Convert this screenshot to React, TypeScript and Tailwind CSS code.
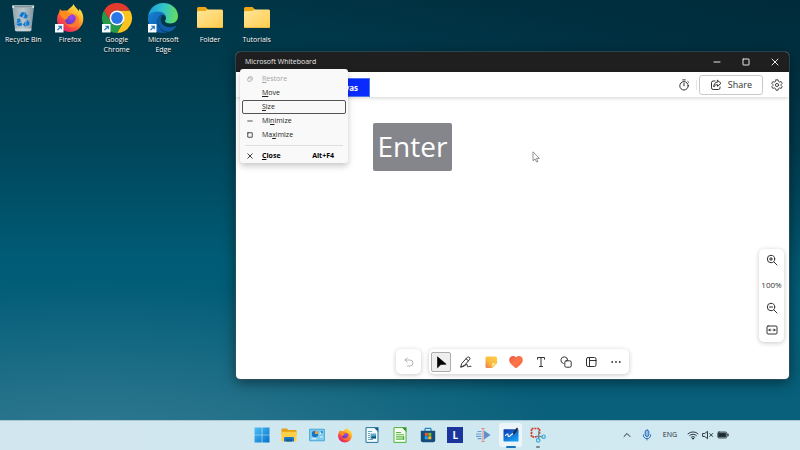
import React from "react";

type IconProps = { className?: string };

const stroke = {
  fill: "none",
  stroke: "currentColor",
  strokeLinecap: "round" as const,
  strokeLinejoin: "round" as const,
};

/* ---------- desktop icons ---------- */

function ShortcutArrow() {
  return (
    <g>
      <rect x="1" y="21" width="8.500" height="8.500" fill="#f8fbff" />
      <path d="M3.500 27 7.200 23.300M4.300 23.200h3v3" fill="none" stroke="#1673b8" strokeWidth="1.100" />
    </g>
  );
}

function RecycleBin() {
  return (
    <svg viewBox="0 0 32 30" className="h-[30px] w-8">
      <defs>
        <linearGradient id="bin" x1="0" x2="1">
          <stop offset="0" stopColor="#93a7af" />
          <stop offset=".5" stopColor="#b7c5ca" />
          <stop offset="1" stopColor="#7e949e" />
        </linearGradient>
      </defs>
      <path d="M5.200 2.500h22L24.300 27a1.500 1.500 0 0 1-1.500 1.300H9.500A1.500 1.500 0 0 1 8 27z" fill="url(#bin)" />
      <path d="M5.200 2.500h22l-.3 2.600H5.500z" fill="#dbe3e6" />
      <path d="M7 3.300h18.500l-.2 1.200H7.200z" fill="#66777f" />
      <path d="M7.900 25.500h16.600l-.2 1.800a1.500 1.500 0 0 1-1.400 1H9.500a1.500 1.500 0 0 1-1.500-1z" fill="#d3dce0" opacity=".7" />
      <g fill="#0878d4" stroke="#9db6c2" strokeWidth=".4">
        <path d="M12 13.300 13.800 10q.6-1 1.700-1h2.800l-2.900 5.500z" />
        <path d="m17.500 9 1.200.6 1.500 2.600 1.300-.7-1.600 4.200-4.300-.8 1.400-.8z" />
        <path d="m20.300 16.300 2.300 3.300q.4 1-.2 1.800L21 22.900h-2v-3.600z" />
        <path d="M18.700 18.800v5.800l-3-3.200 3-3.300z" />
        <path d="M15 19.500v3.400h-3.700q-1 0-1.400-.8l-.8-1.500z" />
        <path d="m8.800 16.200 4.200-.9 1.300 4-1.300-.6-.8 1.200-2.800.2 1-3z" />
      </g>
    </svg>
  );
}

function FirefoxArt({ id }: { id: string }) {
  return (
    <g>
      <defs>
        <linearGradient id={id + "a"} x1=".85" y1=".05" x2=".2" y2=".95">
          <stop offset="0" stopColor="#fff04a" />
          <stop offset=".35" stopColor="#ffb02a" />
          <stop offset=".65" stopColor="#ff5a35" />
          <stop offset="1" stopColor="#e01a72" />
        </linearGradient>
        <radialGradient id={id + "b"} cx=".6" cy=".3" r=".8">
          <stop offset="0" stopColor="#a046f5" />
          <stop offset="1" stopColor="#5337b8" />
        </radialGradient>
      </defs>
      <path
        d="M19.500 1c1 3 4 4.500 5 7 .7-.5.800-1.500.800-2.300C28 8 29.500 12 29.300 16A13.300 13.300 0 0 1 16 29C8.500 29 3 23.500 3 16.500c0-3.500 1-5.500 2.300-7.300 0-1.200.2-2.200.8-3.200.8 1.500 1.700 1.800 2.600 2.100 1.800-.7 3.600-.5 4.700-.3C15 4.800 18.500 4.200 19.500 1z"
        fill={"url(#" + id + "a)"}
      />
      <circle cx="16.500" cy="16.300" r="5.600" fill={"url(#" + id + "b)"} />
      <path d="M5.300 9.200c2-1.800 5.500-1.700 7.700-.2 1.200.9 3 1 4.700 1.700 0 2-3.500 1.900-3.700 3.200-.2 1.600-1.800 1.800-2.800 3.200-1.600-3-4.700-1.900-5.900-7.900z" fill="#ff8b1d" />
      <path d="M11 19.500c2.500 2.500 6 1.900 7.900.6 2.700-2 3.900-5.800 1.600-9.300 4.300 2 5.800 6.400 3.500 10.400-2.800 4.500-10.500 4.200-13-1.700z" fill="#ff7a2e" opacity=".85" />
    </g>
  );
}

function Firefox() {
  return (
    <svg viewBox="0 0 32 30" className="h-[30px] w-8">
      <FirefoxArt id="fx-desk" />
      <ShortcutArrow />
    </svg>
  );
}

function Chrome() {
  return (
    <svg viewBox="0 0 32 30" className="h-[30px] w-8">
      <g transform="translate(16 15)">
        <path d="M13 -7.500A15 15 0 0 1 0 15L6.500 3.750 0 -7.500z" fill="#fcc31e" />
        <path d="M-13 -7.500A15 15 0 0 1 13 -7.500H0A7.500 7.500 0 0 0-6.800 3.200z" fill="#e33b2e" />
        <path d="M-13 -7.500A15 15 0 0 0 0 15L6.500 3.750A7.500 7.500 0 0 1-6.500 3.750z" fill="#249b48" />
        <circle r="7.500" fill="#fff" />
        <circle r="5.900" fill="#2b76e5" />
      </g>
      <ShortcutArrow />
    </svg>
  );
}

function Edge() {
  return (
    <svg viewBox="0 0 32 30" className="h-[30px] w-8">
      <defs>
        <linearGradient id="edge-top" x1="0" y1=".4" x2="1" y2=".5">
          <stop offset="0" stopColor="#1c9bde" />
          <stop offset=".5" stopColor="#31c5c9" />
          <stop offset="1" stopColor="#68dc5c" />
        </linearGradient>
        <linearGradient id="edge-low" x1="0" y1="0" x2="1" y2="1">
          <stop offset="0" stopColor="#1684d8" />
          <stop offset="1" stopColor="#0c4d99" />
        </linearGradient>
      </defs>
      <path d="M1 14C2 5.500 8.500 0 16 0c9 0 15 6 15 13 0 4.800-3.500 7.500-7.500 7.500-3.500 0-5.500-1.200-5.500-2.300 0-.8 1-1.200 1-3.200 0-3-3.500-6-8.500-6C5.500 9 2 11.500 1 14z" fill="url(#edge-top)" />
      <path d="M1 14.500C2 11 5.800 8.500 10.500 8.500c4.800 0 8.500 2.800 8.500 6.200 0-1.500-1.800-2.700-3.500-2.700-2.500 0-5 3-5 6.500 0 5.500 4 10.500 10 10.500-1.500.8-3 1-4.500 1C7 30 .2 23 1 14.500z" fill="url(#edge-low)" />
      <path d="M12.500 13.500c-3.500 4-2 14 8 15.200 4 .3 7.300-3 8.300-5 .3-.7-.2-1-.8-.7-6 3-14 .2-14.300-6 0-1.500.5-3 1.600-4.300-1 0-2 .2-2.800.8z" fill="#115ca6" />
      <ShortcutArrow />
    </svg>
  );
}

function Folder() {
  return (
    <svg viewBox="0 0 32 30" className="h-[30px] w-8">
      <defs>
        <linearGradient id="folder" x1="0" y1="0" x2="1" y2="1">
          <stop offset="0" stopColor="#ffe59a" />
          <stop offset="1" stopColor="#ffcd4e" />
        </linearGradient>
      </defs>
      <path d="M3 5.500A1.500 1.500 0 0 1 4.500 4h7l3 3h13A1.500 1.500 0 0 1 29 8.500V20H3z" fill="#eda817" />
      <path d="M3 9.500A1.500 1.500 0 0 1 4.500 8H11l3-1.500h13.500A1.500 1.500 0 0 1 29 8v15.500a1.500 1.500 0 0 1-1.500 1.500h-23A1.500 1.500 0 0 1 3 23.500z" fill="url(#folder)" />
      <path d="M3.300 24.500h25.400" stroke="#eab336" strokeWidth=".8" />
    </svg>
  );
}

const shortcuts = [
  { label: "Recycle Bin", Icon: RecycleBin },
  { label: "Firefox", Icon: Firefox },
  { label: "Google Chrome", Icon: Chrome },
  { label: "Microsoft Edge", Icon: Edge },
  { label: "Folder", Icon: Folder },
  { label: "Tutorials", Icon: Folder },
];

function DesktopIcons() {
  return (
    <div className="grid w-[280px] grid-cols-6 pt-[3px]">
      {shortcuts.map(({ label, Icon }) => (
        <button key={label} className="flex flex-col items-center gap-0.5 px-0.5">
          <Icon />
          <span className="text-[7px] leading-[10px] text-white [text-shadow:0_1px_1px_rgba(0,0,0,.8)]">{label}</span>
        </button>
      ))}
    </div>
  );
}

/* ---------- window chrome ---------- */

function MinimizeGlyph({ className }: IconProps) {
  return (
    <svg viewBox="0 0 8 8" className={className} {...stroke}>
      <path d="M1 4h6" />
    </svg>
  );
}

function MaximizeGlyph({ className }: IconProps) {
  return (
    <svg viewBox="0 0 8 8" className={className} {...stroke}>
      <rect x="1" y="1" width="6" height="6" rx=".3" />
    </svg>
  );
}

function CloseGlyph({ className }: IconProps) {
  return (
    <svg viewBox="0 0 8 8" className={className} {...stroke}>
      <path d="m1 1 6 6m0-6L1 7" />
    </svg>
  );
}

function RestoreGlyph({ className }: IconProps) {
  return (
    <svg viewBox="0 0 8 8" className={className} {...stroke}>
      <rect x="1" y="2.500" width="4.500" height="4.500" rx="1" />
      <path d="M2.800 1h2.700A1.500 1.500 0 0 1 7 2.500v2.700" />
    </svg>
  );
}

function TitleBar() {
  return (
    <header className="flex h-5 shrink-0 items-center justify-between bg-[#1f1f1f] pl-[9px] text-[#e6e6e6]">
      <h1 className="text-[7px] leading-5">Microsoft Whiteboard</h1>
      <div className="flex">
        <button aria-label="Minimize window" className="flex w-[29px] justify-center">
          <MinimizeGlyph className="size-2" />
        </button>
        <button aria-label="Maximize window" className="flex w-[29px] justify-center">
          <MaximizeGlyph className="size-2" />
        </button>
        <button aria-label="Close window" className="flex w-[29px] justify-center">
          <CloseGlyph className="size-2" />
        </button>
      </div>
    </header>
  );
}

function SystemMenu() {
  const row = "grid h-3.5 w-full grid-cols-[15px_1fr_auto] items-center rounded-[2px] border pr-[11px] pl-1 text-left text-[7px] leading-3";
  return (
    <div role="menu" className="absolute top-[17px] left-1 z-20 flex w-[108px] flex-col rounded-[3px] bg-[#f9f9f9] px-0.5 pt-[3px] text-[#1b1b1b] shadow-[0_3px_6px_rgba(0,0,0,.22)]">
      <button role="menuitem" disabled className={row + " border-transparent text-[#a3a3a3]"}>
        <RestoreGlyph className="size-1.5" />
        <span><u>R</u>estore</span>
      </button>
      <button role="menuitem" className={row + " border-transparent"}>
        <span />
        <span><u>M</u>ove</span>
      </button>
      <button role="menuitem" className={row + " border-[#555]"}>
        <span />
        <span><u>S</u>ize</span>
      </button>
      <button role="menuitem" className={row + " border-transparent"}>
        <MinimizeGlyph className="size-1.5" />
        <span>Mi<u>n</u>imize</span>
      </button>
      <button role="menuitem" className={row + " border-transparent"}>
        <MaximizeGlyph className="size-1.5" />
        <span>Ma<u>x</u>imize</span>
      </button>
      <hr className="mx-[3px] my-[3px] border-[#dedede]" />
      <button role="menuitem" className={row + " border-transparent font-bold text-black"}>
        <CloseGlyph className="size-1.5" />
        <span><u>C</u>lose</span>
        <span>Alt+F4</span>
      </button>
    </div>
  );
}

function AppHeader() {
  return (
    <div className="z-10 flex h-[25px] shrink-0 items-center justify-between bg-white pr-1.5 text-[#333] shadow-[0_1px_4px_rgba(0,0,0,.18)]">
      <a href="#canvas" className="ml-[53px] self-end border border-[#4b75e8] bg-[#0a2bff] px-[11px] text-[8px] leading-[17px] font-bold text-white">
        Skip to canvas
      </a>
      <div className="flex items-center">
        <button aria-label="Timer">
          <svg viewBox="0 0 12 12" className="size-3" {...stroke}>
            <circle cx="6" cy="6.800" r="4.200" />
            <path d="M6 4.200v2.600M4.700.9h2.600M9.800 2.500l.8.8" />
          </svg>
        </button>
        <span className="mr-0.5 ml-1.5 h-2.5 w-px bg-[#e4e4e4]" />
        <button className="flex h-5 items-center gap-1.5 rounded-[3px] border border-[#c9c9c9] px-[10px] text-[9px] leading-4">
          <svg viewBox="0 0 12 12" className="size-3" {...stroke}>
            <path d="M5 2H3.200A1.700 1.700 0 0 0 1.500 3.700v5.100a1.700 1.700 0 0 0 1.700 1.700h5.100A1.700 1.700 0 0 0 10 8.800V8" />
            <path d="M7.500 1.300 11 4.300l-3.500 3V5.600C5.700 5.600 4.600 6.500 3.800 8c0-2.700 1.200-4.700 3.700-5z" />
          </svg>
          Share
        </button>
        <button aria-label="Settings" className="ml-2">
          <svg viewBox="0 0 12 12" className="size-3" {...stroke} strokeWidth=".9">
            <path d="M5 .8h2l.4 1.500 1.300.8 1.500-.5 1 1.800L10.100 5.500v1l1.100 1.100-1 1.800-1.500-.5-1.300.8L7 11.200H5l-.4-1.500-1.300-.8-1.500.5-1-1.800 1.100-1.100v-1L.8 4.400l1-1.800 1.500.5 1.300-.8z" />
            <circle cx="6" cy="6" r="1.600" />
          </svg>
        </button>
      </div>
    </div>
  );
}

/* ---------- whiteboard tools ---------- */

function PointerIcon() {
  return (
    <svg viewBox="0 0 14 14" className="size-3.5">
      <path d="M3.500 1.800v11L6.800 9.600l5.400-.4z" fill="#000" stroke="#000" strokeLinejoin="round" strokeWidth=".6" />
    </svg>
  );
}

function InkIcon() {
  return (
    <svg viewBox="0 0 14 14" className="size-3.5" {...stroke}>
      <path d="m3 8.200 5.400-6c1-1 3.400.7 2.400 2L5.600 10.300 2 12z" />
      <path d="m7 3.800 2.500 2M2 12c3 0 4.500-2.500 6-2.500 1.300 0-.5 2.300.8 2.300 1 0 1.400-.8 3.200-.5" />
    </svg>
  );
}

function NoteIcon() {
  return (
    <svg viewBox="0 0 14 14" className="size-3.5">
      <defs>
        <linearGradient id="note" x1="0" y1="1" x2="1" y2="0">
          <stop offset="0" stopColor="#f0705a" />
          <stop offset=".4" stopColor="#fab83f" />
          <stop offset="1" stopColor="#ffcf49" />
        </linearGradient>
      </defs>
      <path d="M3 1.500h8.500a1.500 1.500 0 0 1 1.500 1.500v5l-5 5H3A1.500 1.500 0 0 1 1.500 11.500V3A1.500 1.500 0 0 1 3 1.500z" fill="url(#note)" />
      <path d="M13 7.500 7.500 13V9A1.500 1.500 0 0 1 9 7.500z" fill="#ffe67b" stroke="#e59a35" strokeWidth=".4" />
    </svg>
  );
}

function HeartIcon() {
  return (
    <svg viewBox="0 0 14 14" className="size-3.5">
      <defs>
        <linearGradient id="heart" x1="0" y1="0" x2="1" y2="1">
          <stop offset="0" stopColor="#e95b50" />
          <stop offset=".5" stopColor="#ff7545" />
          <stop offset="1" stopColor="#f45f42" />
        </linearGradient>
      </defs>
      <path d="M7 13.300C4 10.800.2 8.300.2 4.900.2.800 4.700-.3 7 2.300 9.300-.3 13.800.8 13.800 4.900 13.800 8.300 10 10.800 7 13.300z" fill="url(#heart)" />
    </svg>
  );
}

function TextIcon() {
  return (
    <svg viewBox="0 0 14 14" className="size-3.5" {...stroke}>
      <path d="M3.500 4.200V2.500h7v1.700M7 2.500v9M5.500 11.500h3" />
    </svg>
  );
}

function ShapesIcon() {
  return (
    <svg viewBox="0 0 14 14" className="size-3.5" {...stroke}>
      <path d="M4.300 8.500a3.400 3.400 0 1 1 4.400-3.200" />
      <rect x="5.800" y="5.800" width="6.400" height="6.400" rx="1.400" />
    </svg>
  );
}

function TemplateIcon() {
  return (
    <svg viewBox="0 0 14 14" className="size-3.5" {...stroke}>
      <rect x="2.500" y="2.500" width="9.500" height="9" rx="1.500" />
      <path d="M5.500 2.500v9M5.500 5.500H12" />
    </svg>
  );
}

function MoreIcon() {
  return (
    <svg viewBox="0 0 14 14" className="size-3.5" fill="currentColor">
      <circle cx="3.200" cy="7" r=".9" />
      <circle cx="7" cy="7" r=".9" />
      <circle cx="10.800" cy="7" r=".9" />
    </svg>
  );
}

const tools = [
  { name: "Select", Icon: PointerIcon, active: true },
  { name: "Inking", Icon: InkIcon },
  { name: "Notes", Icon: NoteIcon },
  { name: "Reactions", Icon: HeartIcon },
  { name: "Text", Icon: TextIcon },
  { name: "Shapes", Icon: ShapesIcon },
  { name: "Templates", Icon: TemplateIcon },
  { name: "More options", Icon: MoreIcon },
];

const floating = "rounded-[5px] bg-white shadow-[0_1px_5px_rgba(0,0,0,.22)]";

function ToolDock() {
  return (
    <div className="absolute inset-x-0 bottom-[5px] flex justify-center gap-2 text-[#333]">
      <button aria-label="Undo" className={"flex size-[25px] items-center justify-center text-[#b5b5b5] " + floating}>
        <svg viewBox="0 0 12 12" className="size-3" {...stroke}>
          <path d="M4.200 1.800 2 4l2.200 2.200M2 4h5a3 3 0 0 1 0 6H4.500" />
        </svg>
      </button>
      <div className={"flex h-[25px] items-center gap-[5px] pr-[3px] pl-0.5 " + floating}>
        {tools.map(({ name, Icon, active }) => (
          <button
            key={name}
            aria-label={name}
            className={"flex size-5 items-center justify-center rounded-[2px] " + (active ? "border border-[#adadad] bg-[#eeeeee]" : "")}
          >
            <Icon />
          </button>
        ))}
      </div>
    </div>
  );
}

function ZoomPanel() {
  const glass = "M8 8 11 11";
  return (
    <div className={"absolute right-[5px] bottom-[37px] flex w-[25px] flex-col items-center pt-[5px] pb-1.5 text-[#333] " + floating}>
      <button aria-label="Zoom in" className="mb-[13px]">
        <svg viewBox="0 0 12 12" className="size-3" {...stroke}>
          <circle cx="5" cy="5" r="3.700" />
          <path d={glass} />
          <path d="M5 3.400v3.200M3.400 5h3.200" />
        </svg>
      </button>
      <button className="text-[8px] leading-3">100%</button>
      <button aria-label="Zoom out" className="mt-[11px]">
        <svg viewBox="0 0 12 12" className="size-3" {...stroke}>
          <circle cx="5" cy="5" r="3.700" />
          <path d={glass} />
          <path d="M3.400 5h3.200" />
        </svg>
      </button>
      <button aria-label="Fit to screen" className="mt-2.5">
        <svg viewBox="0 0 12 12" className="size-3" {...stroke}>
          <rect x="1" y="2" width="10" height="8" rx="1" />
          <path d="M5 6H2.900m.9-1L2.800 6l1 1M7 6h2.100M8.200 5l1 1-1 1" />
        </svg>
      </button>
    </div>
  );
}

function WhiteboardWindow() {
  return (
    <section aria-label="Microsoft Whiteboard" className="absolute top-[52px] right-[11px] bottom-[41px] left-[236px] rounded-[4px] shadow-[0_3px_14px_rgba(0,0,0,.5)]">
      <div className="flex h-full flex-col overflow-hidden rounded-[4px] bg-white outline outline-[#3d5660]/60">
        <TitleBar />
        <AppHeader />
        <main id="canvas" className="relative flex-1">
          <kbd className="absolute top-[26px] left-[137px] flex h-12 w-[79px] items-center justify-center rounded-[2px] bg-[#85868b] pb-0.5 font-['Open_Sans',sans-serif] text-[28px] leading-9 text-white">
            Enter
          </kbd>
          <svg viewBox="0 0 8 12" className="absolute top-[54px] left-[296px] h-3 w-2">
            <path d="M1 .8v9l2.100-1.900 1.500 3.200 1.300-.6-1.400-3.100h2.900z" fill="#fff" stroke="#666" strokeWidth=".7" />
          </svg>
          <ZoomPanel />
          <ToolDock />
        </main>
      </div>
      <SystemMenu />
    </section>
  );
}

/* ---------- taskbar ---------- */

function StartIcon() {
  return (
    <svg viewBox="0 0 16 16" className="size-4">
      <defs>
        <linearGradient id="start" x1="0" y1="0" x2="1" y2="1">
          <stop offset="0" stopColor="#4cc1f2" />
          <stop offset="1" stopColor="#0571ce" />
        </linearGradient>
      </defs>
      <path d="M.5.5h7.200v7.200H.5zM8.300.5h7.200v7.200H8.300zM.5 8.300h7.200v7.200H.5zM8.300 8.300h7.200v7.200H8.300z" fill="url(#start)" />
    </svg>
  );
}

function ExplorerIcon() {
  return (
    <svg viewBox="0 0 16 16" className="size-4">
      <path d="M.5 2.200a.8.800 0 0 1 .8-.8h4.500l1.500 1.700h7.400a.8.800 0 0 1 .8.800V8H.5z" fill="#e59f13" />
      <path d="M.5 4.800h15v8.700a.9.900 0 0 1-.9.900H1.400a.9.900 0 0 1-.9-.9z" fill="#ffcf48" />
      <path d="M3 14.400v-3.200A1.200 1.200 0 0 1 4.200 10h7.600a1.200 1.200 0 0 1 1.200 1.200v3.200z" fill="#1778c9" />
      <path d="M5 12.300h6v2.100H5z" fill="#105a9f" />
    </svg>
  );
}

function ControlPanelIcon() {
  return (
    <svg viewBox="0 0 16 16" className="size-4">
      <rect x=".2" y="1.800" width="15.600" height="12.400" rx="1" fill="#379fd2" />
      <rect x="1" y="2.600" width="14" height="10.800" rx=".5" fill="#7dcaf0" />
      <circle cx="6" cy="7" r="3.200" fill="#1476c5" />
      <path d="M6 7V3.800A3.200 3.200 0 0 1 9.200 7z" fill="#f4a12b" />
      <path d="M10.500 7.500 13.300 4M10.800 10h3M2.500 11.700h5" stroke="#e9f8ff" strokeWidth="1.100" />
      <circle cx="12.800" cy="5" r="1" fill="#1476c5" />
    </svg>
  );
}

function TaskFirefox() {
  return (
    <svg viewBox="2 0 28 30" className="size-4">
      <FirefoxArt id="fx-task" />
    </svg>
  );
}

function WriterIcon() {
  return (
    <svg viewBox="0 0 16 16" className="size-4">
      <path d="M2 .6h8.500L14 4.100v11.300H2z" fill="#f5fafc" stroke="#24749c" />
      <path d="M9.800.2 14.500 5V.2z" fill="#0e5e86" />
      <path d="M4 4.500h4M4 6.500h2M4 8.500h2M4 10.500h2M4 12.500h5" stroke="#5d9cba" strokeWidth=".9" />
      <path d="M6.500 6.500H12v5H6.500z" fill="#5fa8c8" />
      <path d="m6.500 11.500 2.200-2.800 1.300 1.100 2-1.600v3.300z" fill="#14577a" />
    </svg>
  );
}

function CalcIcon() {
  return (
    <svg viewBox="0 0 16 16" className="size-4">
      <path d="M2 .6h8.500L14 4.100v11.300H2z" fill="#f7fdf4" stroke="#4db535" />
      <path d="M9.800.2 14.500 5V.2z" fill="#2f9a1f" />
      <path d="M4 5.500h5M4 7.700h8M4 9.900h8M4 12.100h5" stroke="#55b63c" strokeWidth="1.100" />
      <path d="M9.500 11h1v2h-1zM11.200 9.500h1V13h-1z" fill="#2f9a1f" />
    </svg>
  );
}

function StoreIcon() {
  return (
    <svg viewBox="0 0 16 16" className="size-4">
      <path d="M5 4V2.200A.8.800 0 0 1 5.800 1.400h4.400a.8.800 0 0 1 .8.800V4" fill="none" stroke="#1a86c9" strokeWidth="1.200" />
      <path d="M.8 3.800h14.400v9.400a2 2 0 0 1-2 2H2.800a2 2 0 0 1-2-2z" fill="#144c7c" />
      <path d="M4.800 5.800h3v3h-3z" fill="#f1582c" />
      <path d="M8.300 5.800h3v3h-3z" fill="#7fbe25" />
      <path d="M4.800 9.300h3v3h-3z" fill="#27a5ea" />
      <path d="M8.300 9.300h3v3h-3z" fill="#fdb913" />
    </svg>
  );
}

function LetterIcon() {
  return (
    <span className="flex size-4 items-center justify-center bg-[#1b359c] text-[10px] leading-4 font-bold text-white">L</span>
  );
}

function MirrorIcon() {
  return (
    <svg viewBox="0 0 16 16" className="size-4">
      <path d="M2.500 4.500h4M1 7h5.500M1 9.300h5.500M2.500 11.700h4" stroke="#699fd2" strokeWidth="1.200" />
      <path d="M8 1.500v13M6.300 1.500h3.400M6.300 14.500h3.400" stroke="#e58e91" strokeWidth="1.100" />
      <path d="M9 3.500v9L15.500 8z" fill="#5d8fc9" />
    </svg>
  );
}

function BoardIcon() {
  return (
    <svg viewBox="0 0 16 16" className="size-4">
      <defs>
        <linearGradient id="board" x1="0" y1="0" x2=".6" y2="1">
          <stop offset="0" stopColor="#1133ad" />
          <stop offset="1" stopColor="#159df2" />
        </linearGradient>
      </defs>
      <rect x=".5" y="2.300" width="15" height="12.200" rx=".8" fill="url(#board)" />
      <path d="M2.500 8.500C4 6.500 5 6.500 5 8s.8 2 2 .8 1.700-1.600 3.200-2.300" fill="none" stroke="#fff" strokeWidth="1.100" strokeLinecap="round" />
      <path d="m9.800 7.800.7-2.600L13.900.6l1.200.9L12 6.600z" fill="#24282f" />
    </svg>
  );
}

function SnipIcon() {
  return (
    <svg viewBox="0 0 16 16" className="size-4">
      <path d="M1.500 9.800V1.500H9.500V7" fill="none" stroke="#d0391f" strokeWidth="1.700" strokeDasharray="2 .8" />
      <path d="M2.300 9.800H6.500" stroke="#d0391f" strokeWidth="1.700" strokeDasharray="2 .8" />
      <path d="M8.800 4v7l-.6 1.200M6 9.300l6.500.3" stroke="#74838d" strokeWidth="1.200" />
      <circle cx="8.200" cy="13.300" r="1.800" fill="none" stroke="#3ba7d8" strokeWidth="1.200" />
      <circle cx="13.600" cy="9.700" r="1.700" fill="none" stroke="#3ba7d8" strokeWidth="1.200" />
    </svg>
  );
}

const apps = [
  { name: "Start", Icon: StartIcon },
  { name: "File Explorer", Icon: ExplorerIcon },
  { name: "Control Panel", Icon: ControlPanelIcon },
  { name: "Firefox", Icon: TaskFirefox },
  { name: "Writer", Icon: WriterIcon },
  { name: "Calc", Icon: CalcIcon },
  { name: "Store", Icon: StoreIcon },
  { name: "L", Icon: LetterIcon },
  { name: "Mirror", Icon: MirrorIcon },
  { name: "Whiteboard", Icon: BoardIcon, state: "active" },
  { name: "Snipping Tool", Icon: SnipIcon, state: "open" },
];

function Tray() {
  return (
    <div className="flex items-center justify-end pr-[71px] text-[#1d2b31]">
      <button aria-label="Show hidden icons" className="mr-[11px]">
        <svg viewBox="0 0 8 8" className="size-2" {...stroke}>
          <path d="m1 5.500 3-3 3 3" />
        </svg>
      </button>
      <button aria-label="Microphone" className="mr-[11px] text-[#2d6db5]">
        <svg viewBox="0 0 10 12" className="h-3 w-2.5" {...stroke}>
          <rect x="3.200" y="1" width="3.600" height="6.500" rx="1.800" fill="#8fbbe8" />
          <path d="M1.300 5.800a3.700 3.700 0 0 0 7.400 0M5 9.500V11" />
        </svg>
      </button>
      <button className="mr-[10px] text-[7px] leading-4">ENG</button>
      <button aria-label="Network, volume and battery" className="flex items-center gap-[3px]">
        <svg viewBox="0 0 12 10" className="h-2.5 w-3" {...stroke} strokeWidth=".9">
          <path d="M1 3.800a7.200 7.200 0 0 1 10 0M2.600 5.500a4.900 4.900 0 0 1 6.800 0M4.200 7.200a2.600 2.600 0 0 1 3.600 0" />
          <circle cx="6" cy="8.600" r=".6" fill="currentColor" />
        </svg>
        <svg viewBox="0 0 12 10" className="h-2.5 w-3" {...stroke} strokeWidth=".9">
          <path d="M1 3.500h1.800L5.500 1.300v7.400L2.800 6.500H1zM7.700 3.500l3 3M10.700 3.500l-3 3" />
        </svg>
        <svg viewBox="0 0 12 10" className="h-2.5 w-3" {...stroke} strokeWidth=".8">
          <rect x=".8" y="2" width="9" height="6" rx="1.200" />
          <rect x="1.900" y="3.100" width="6.800" height="3.800" fill="currentColor" />
          <path d="M11 4.200v1.600" strokeWidth="1.200" />
        </svg>
      </button>
    </div>
  );
}

function Taskbar() {
  return (
    <footer className="grid h-[30px] shrink-0 grid-cols-[1fr_304px_1fr] items-center border-t border-[#a9c8d3] bg-linear-to-r from-[#d2e6ef] via-[#cfe8f0] to-[#d2e9f1] pb-px">
      <div />
      <nav className="grid grid-cols-11 justify-items-center">
        {apps.map(({ name, Icon, state }) => (
          <button
            key={name}
            aria-label={name}
            className={"relative flex h-6 w-[23px] items-center justify-center rounded-[3px] " + (state === "active" ? "bg-[#ecf5f9]" : "")}
          >
            <Icon />
            {state === "active" && <span className="absolute -bottom-px h-0.5 w-2.5 rounded-full bg-[#1676bd]" />}
            {state === "open" && <span className="absolute -bottom-px h-0.5 w-1 rounded-full bg-[#75878f]" />}
          </button>
        ))}
      </nav>
      <Tray />
    </footer>
  );
}

export default function App() {
  return (
    <div className="flex h-screen flex-col overflow-hidden font-['Open_Sans','Noto_Sans',sans-serif]">
      <div className="relative flex-1 bg-[radial-gradient(ellipse_60%_45%_at_12%_112%,rgba(76,138,162,.7),transparent),radial-gradient(ellipse_at_100%_0%,rgba(0,35,50,.6),transparent_50%),linear-gradient(180deg,#003545_0%,#00465b_35%,#005c76_62%,#09607a_100%)]">
        <DesktopIcons />
        <WhiteboardWindow />
      </div>
      <Taskbar />
    </div>
  );
}
